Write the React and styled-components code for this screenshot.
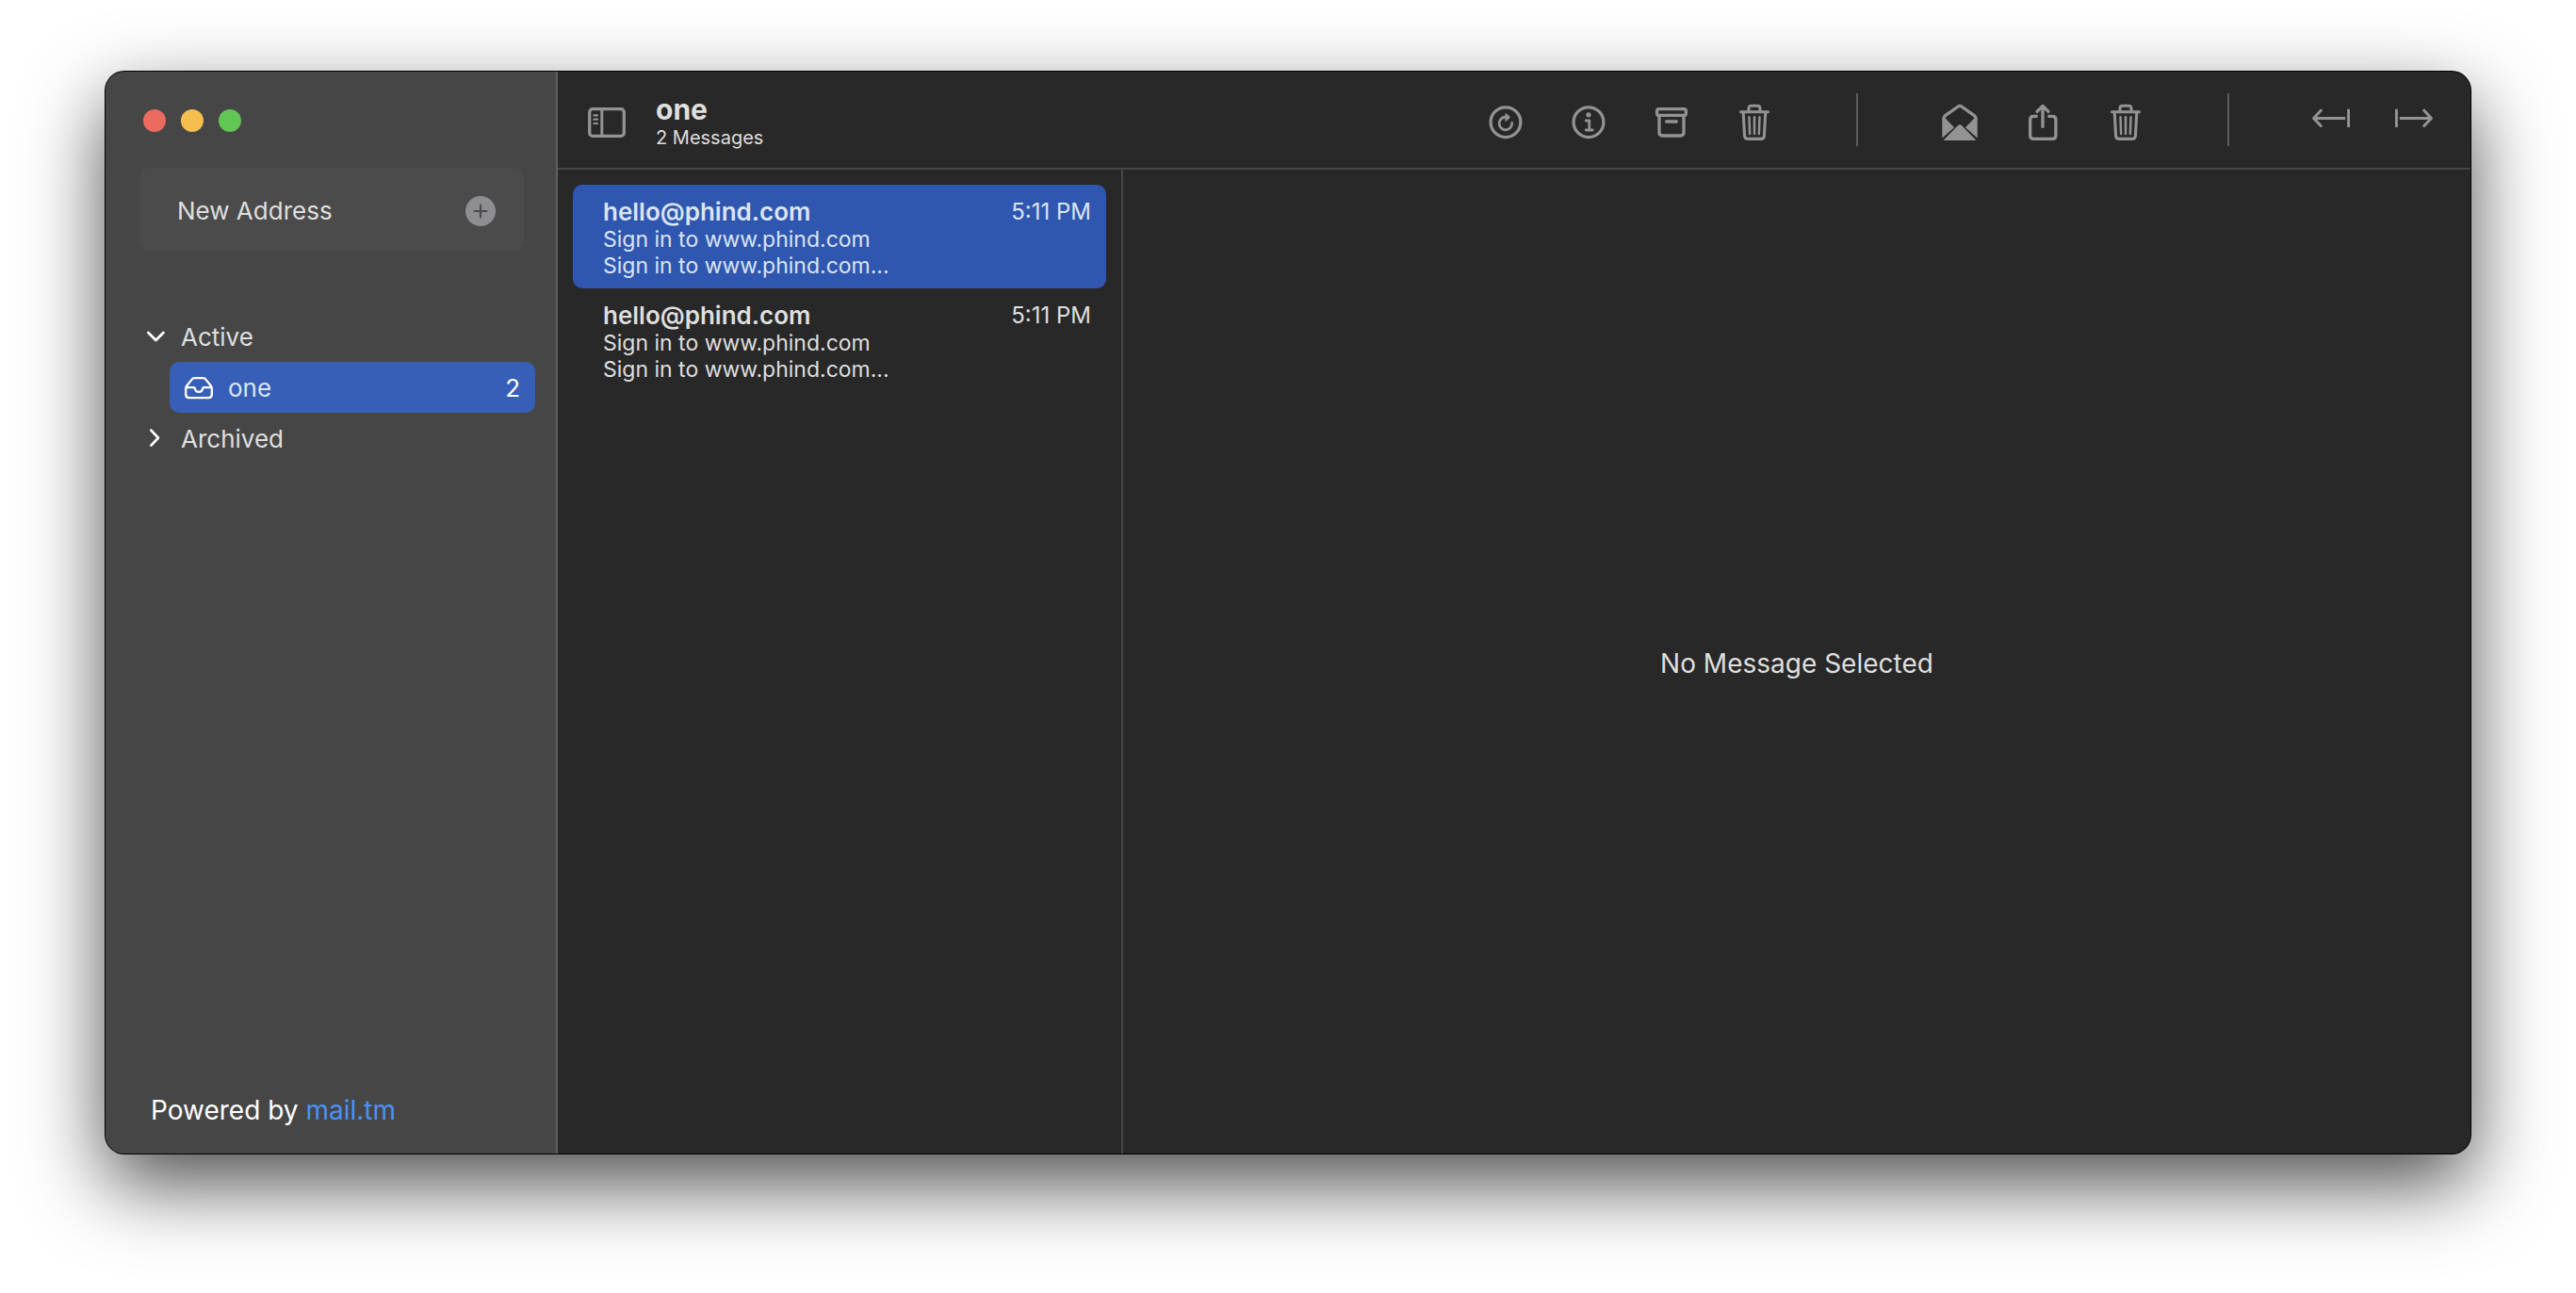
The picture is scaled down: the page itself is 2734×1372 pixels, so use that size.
import React from "react";
import styled, { createGlobalStyle } from "styled-components";

const GlobalStyle = createGlobalStyle`
  *, *::before, *::after { box-sizing: border-box; }
  body {
    margin: 0;
    background: #ffffff;
    font-family: Inter, "Liberation Sans", sans-serif;
    overflow: hidden;
  }
  button {
    font: inherit;
    color: inherit;
    background: none;
    border: 0;
    margin: 0;
    padding: 0;
    text-align: left;
    cursor: default;
  }
  ul { list-style: none; margin: 0; padding: 0; }
  h1, p { margin: 0; }
  svg { display: block; flex: none; }
`;

const Desktop = styled.div`
  display: flex;
  min-height: 100vh;
  padding: 76px 112px 148px;
`;

const Window = styled.div`
  display: flex;
  flex: 1;
  min-width: 0;
  overflow: hidden;
  border-radius: 20px;
  background: #282828;
  color: #dfdfdf;
  box-shadow: 0 0 0 1px #000000, 0 32px 84px rgba(0, 0, 0, 0.7);
`;

const Sidebar = styled.aside`
  display: flex;
  flex-direction: column;
  flex: none;
  width: 480px;
  border-right: 2px solid #606060;
  background: #464646;
  font-size: 26px;
  line-height: 32px;
`;

const TrafficLights = styled.div`
  display: flex;
  gap: 16px;
  padding: 40px 40px 38px;
`;

const Light = styled.button`
  width: 24px;
  height: 24px;
  border-radius: 50%;
  background: ${(p) => p.$color};
`;

const NewAddress = styled.button`
  display: flex;
  align-items: center;
  justify-content: space-between;
  height: 88px;
  margin: 0 34px 64px 36px;
  padding: 4px 30px 0 40px;
  border-radius: 10px;
  background: #4b4b4b;
`;

const Tree = styled.nav`
  flex: 1;
`;

const Group = styled.button`
  display: flex;
  align-items: center;
  gap: 16px;
  width: 100%;
  height: 54px;
  padding: 2px 40px 0;
`;

const Mailbox = styled.button`
  display: flex;
  align-items: center;
  gap: 16px;
  width: calc(100% - 90px);
  height: 54px;
  margin: 0 22px 0 68px;
  padding: 2px 16px 0;
  border-radius: 10px;
  background: #375fb7;
  color: #dce4f4;
`;

const Count = styled.span`
  margin-left: auto;
  color: #ffffff;
`;

const Powered = styled.p`
  padding: 0 48px 28px;
  font-size: 28px;
  line-height: 36px;
  color: #ffffff;
`;

const Link = styled.a`
  color: #4a92f7;
  text-decoration: none;
`;

const Main = styled.div`
  display: flex;
  flex-direction: column;
  flex: 1;
  min-width: 0;
`;

const Toolbar = styled.header`
  display: flex;
  align-items: center;
  height: 104px;
  padding: 0 16px 0 8px;
  border-bottom: 2px solid #464646;
`;

const TitleBlock = styled.div`
  flex: 1;
  padding-top: 4px;
  margin-left: 8px;
`;

const Title = styled.h1`
  font-size: 30px;
  line-height: 34px;
  font-weight: 700;
`;

const Subtitle = styled.p`
  font-size: 20px;
  line-height: 26px;
`;

const Tool = styled.button`
  display: flex;
  align-items: center;
  justify-content: center;
  width: 88px;
  height: 88px;
  padding-top: 6px;
  color: #939393;
`;

const Separator = styled.span`
  width: 2px;
  height: 56px;
  margin: 0 64px;
  background: #5c5c5c;
`;

const Content = styled.div`
  display: flex;
  flex: 1;
`;

const MessageList = styled.ul`
  flex: none;
  width: 600px;
  padding: 16px;
  border-right: 2px solid #464646;
`;

const Message = styled.button`
  display: block;
  width: 100%;
  padding: 14px 16px 10px 32px;
  border-radius: 10px;
  background: ${(p) => (p.$selected ? "#2f57b0" : "transparent")};
  color: ${(p) => (p.$selected ? "#dce4f4" : "#dfdfdf")};
`;

const MessageHead = styled.span`
  display: flex;
  justify-content: space-between;
  line-height: 30px;
`;

const Sender = styled.span`
  font-size: 26px;
  font-weight: 600;
`;

const Time = styled.time`
  font-size: 24px;
`;

const Excerpt = styled.span`
  display: block;
  font-size: 23px;
  line-height: 28px;
`;

const Reader = styled.section`
  display: flex;
  align-items: center;
  justify-content: center;
  flex: 1;
  padding-top: 4px;
  font-size: 28px;
`;

const Icon = ({ width = 40, height = 40, stroke = 3.3, children }) => (
  <svg
    width={width}
    height={height}
    viewBox={`0 0 ${width} ${height}`}
    fill="none"
    stroke="currentColor"
    strokeWidth={stroke}
    strokeLinecap="round"
    strokeLinejoin="round"
    aria-hidden="true"
  >
    {children}
  </svg>
);

const PlusIcon = () => (
  <Icon width={32} height={32} stroke={2.2}>
    <circle cx="16" cy="16" r="16" fill="#8e8d92" stroke="none" />
    <path d="M9.5 16H22.5M16 9.5V22.5" stroke="#4b4b4b" />
  </Icon>
);

const ChevronDown = () => (
  <Icon width={24} height={24} stroke={2.8}>
    <path d="M5.4 7L13.4 15L21.4 7" stroke="#ffffff" />
  </Icon>
);

const ChevronRight = () => (
  <Icon width={24} height={24} stroke={2.8}>
    <path d="M8.4 2.6L16 10.6L8.4 18.6" stroke="#ffffff" />
  </Icon>
);

const TrayIcon = () => (
  <Icon width={30} height={24} stroke={2.3}>
    <path
      stroke="#ffffff"
      d="M1.2 12.2C1.2 11 1.6 10.2 2.3 9.3L7.2 3.1C8.2 1.8 9.1 1.2 10.6 1.2H19.4C20.9 1.2 21.8 1.8 22.8 3.1L27.7 9.3C28.4 10.2 28.8 11 28.8 12.2V18.6C28.8 21 27.5 22.2 25.2 22.2H4.8C2.5 22.2 1.2 21 1.2 18.6ZM1.6 11.2H9.4C10.5 11.2 10.9 11.8 11 12.6C11.3 14.5 12.8 15.8 15 15.8S18.7 14.5 19 12.6C19.1 11.8 19.5 11.2 20.6 11.2H28.4"
    />
  </Icon>
);

const SidebarIcon = () => (
  <Icon height={32}>
    <rect x="1.7" y="1.7" width="36.6" height="28.6" rx="3.4" />
    <path d="M14.8 2V30" strokeWidth="3" />
    <path d="M6.4 8.4H10M6.4 12.7H10M6.4 17H10" strokeWidth="2.2" />
  </Icon>
);

const RefreshIcon = () => (
  <Icon>
    <circle cx="20" cy="19.7" r="15.9" />
    <path d="M26.7 20.4A6.8 6.8 0 1 1 20 14.2" strokeWidth="2.7" />
    <path d="M20.2 11L24 14.4L20.2 18Z" fill="currentColor" strokeWidth="1.6" />
  </Icon>
);

const InfoIcon = () => (
  <Icon>
    <circle cx="20" cy="19.7" r="15.9" />
    <circle cx="20" cy="11.8" r="2.6" fill="currentColor" stroke="none" />
    <path d="M17.2 18H20.8V28M17.2 28H24.2" strokeWidth="2.8" />
  </Icon>
);

const ArchiveIcon = () => (
  <Icon>
    <rect x="4.6" y="5.6" width="30.8" height="6.8" rx="2" />
    <path d="M7 13V30.6C7 32.9 8.2 34 10.4 34H29.6C31.8 34 33 32.9 33 30.6V13" />
    <path d="M14.6 19H25.4" />
  </Icon>
);

const TrashIcon = () => (
  <Icon stroke={3.1}>
    <path d="M5.6 8.8H34.4" />
    <path d="M14 8V5.2C14 3.2 15 2.3 17 2.3H23C25 2.3 26 3.2 26 5.2V8" />
    <path d="M8.2 9.4L9.6 34.2C9.7 36.4 10.8 37.4 12.8 37.4H27.2C29.2 37.4 30.3 36.4 30.4 34.2L31.8 9.4" />
    <path d="M14.5 14.2L15.1 32M20 14.2V32M25.5 14.2L24.9 32" strokeWidth="2.5" />
  </Icon>
);

const OpenMailIcon = () => (
  <Icon>
    <path d="M3 17V15.6C3 14.3 3.4 13.5 4.6 12.6L18.2 3C19.4 2.2 20.6 2.2 21.8 3L35.4 12.6C36.6 13.5 37 14.3 37 15.6V17" />
    <path
      d="M1.3 15.6L4.8 15.8L14 25.2L1.3 36.6ZM38.7 15.6L35.2 15.8L26 25.2L38.7 36.6ZM3 38.4L17.6 23.4C19.2 21.8 20.8 21.8 22.4 23.4L37 38.4C36.4 38.9 35.8 39 35 39H5C4.2 39 3.6 38.9 3 38.4Z"
      fill="currentColor"
      stroke="none"
    />
  </Icon>
);

const ShareIcon = () => (
  <Icon>
    <path
      d="M14.6 13.4H10.4C8 13.4 6.7 14.7 6.7 17V33.8C6.7 36.1 8 37.4 10.4 37.4H30.2C32.6 37.4 33.9 36.1 33.9 33.8V17C33.9 14.7 32.6 13.4 30.2 13.4H25.4"
      strokeLinecap="butt"
    />
    <path d="M20 24.4V3M14 8.4L20 2.4L26 8.4" />
  </Icon>
);

const ArrowToIcon = ({ right }) => (
  <Icon stroke={3}>
    <g transform={right ? "translate(40 0) scale(-1 1)" : undefined}>
      <path d="M9.2 7.2L1.6 15.4L9.2 23.6" />
      <path d="M2 15.4H35.2M38.6 5.8V25" strokeLinecap="butt" />
    </g>
  </Icon>
);

const messages = [
  { id: 1, from: "hello@phind.com", time: "5:11 PM", subject: "Sign in to www.phind.com", preview: "Sign in to www.phind.com..." },
  { id: 2, from: "hello@phind.com", time: "5:11 PM", subject: "Sign in to www.phind.com", preview: "Sign in to www.phind.com..." },
];

export default function App() {
  const [selected, setSelected] = React.useState(1);
  return (
    <Desktop>
      <GlobalStyle />
      <Window>
        <Sidebar>
          <TrafficLights>
            <Light $color="#ed6a5f" aria-label="Close" />
            <Light $color="#f5bf4f" aria-label="Minimize" />
            <Light $color="#62c655" aria-label="Zoom" />
          </TrafficLights>
          <NewAddress>
            New Address
            <PlusIcon />
          </NewAddress>
          <Tree>
            <Group aria-expanded="true">
              <ChevronDown />
              Active
            </Group>
            <Mailbox>
              <TrayIcon />
              one
              <Count>2</Count>
            </Mailbox>
            <Group aria-expanded="false">
              <ChevronRight />
              Archived
            </Group>
          </Tree>
          <Powered>
            Powered by <Link href="#">mail.tm</Link>
          </Powered>
        </Sidebar>
        <Main>
          <Toolbar>
            <Tool aria-label="Toggle sidebar"><SidebarIcon /></Tool>
            <TitleBlock>
              <Title>one</Title>
              <Subtitle>2 Messages</Subtitle>
            </TitleBlock>
            <Tool aria-label="Refresh"><RefreshIcon /></Tool>
            <Tool aria-label="Address info"><InfoIcon /></Tool>
            <Tool aria-label="Archive address"><ArchiveIcon /></Tool>
            <Tool aria-label="Delete address"><TrashIcon /></Tool>
            <Separator />
            <Tool aria-label="Mark as unread"><OpenMailIcon /></Tool>
            <Tool aria-label="Share"><ShareIcon /></Tool>
            <Tool aria-label="Delete message"><TrashIcon /></Tool>
            <Separator />
            <Tool aria-label="Previous"><ArrowToIcon /></Tool>
            <Tool aria-label="Next"><ArrowToIcon right /></Tool>
          </Toolbar>
          <Content>
            <MessageList>
              {messages.map((m) => (
                <li key={m.id}>
                  <Message $selected={m.id === selected} onClick={() => setSelected(m.id)}>
                    <MessageHead>
                      <Sender>{m.from}</Sender>
                      <Time>{m.time}</Time>
                    </MessageHead>
                    <Excerpt>{m.subject}</Excerpt>
                    <Excerpt>{m.preview}</Excerpt>
                  </Message>
                </li>
              ))}
            </MessageList>
            <Reader>No Message Selected</Reader>
          </Content>
        </Main>
      </Window>
    </Desktop>
  );
}
